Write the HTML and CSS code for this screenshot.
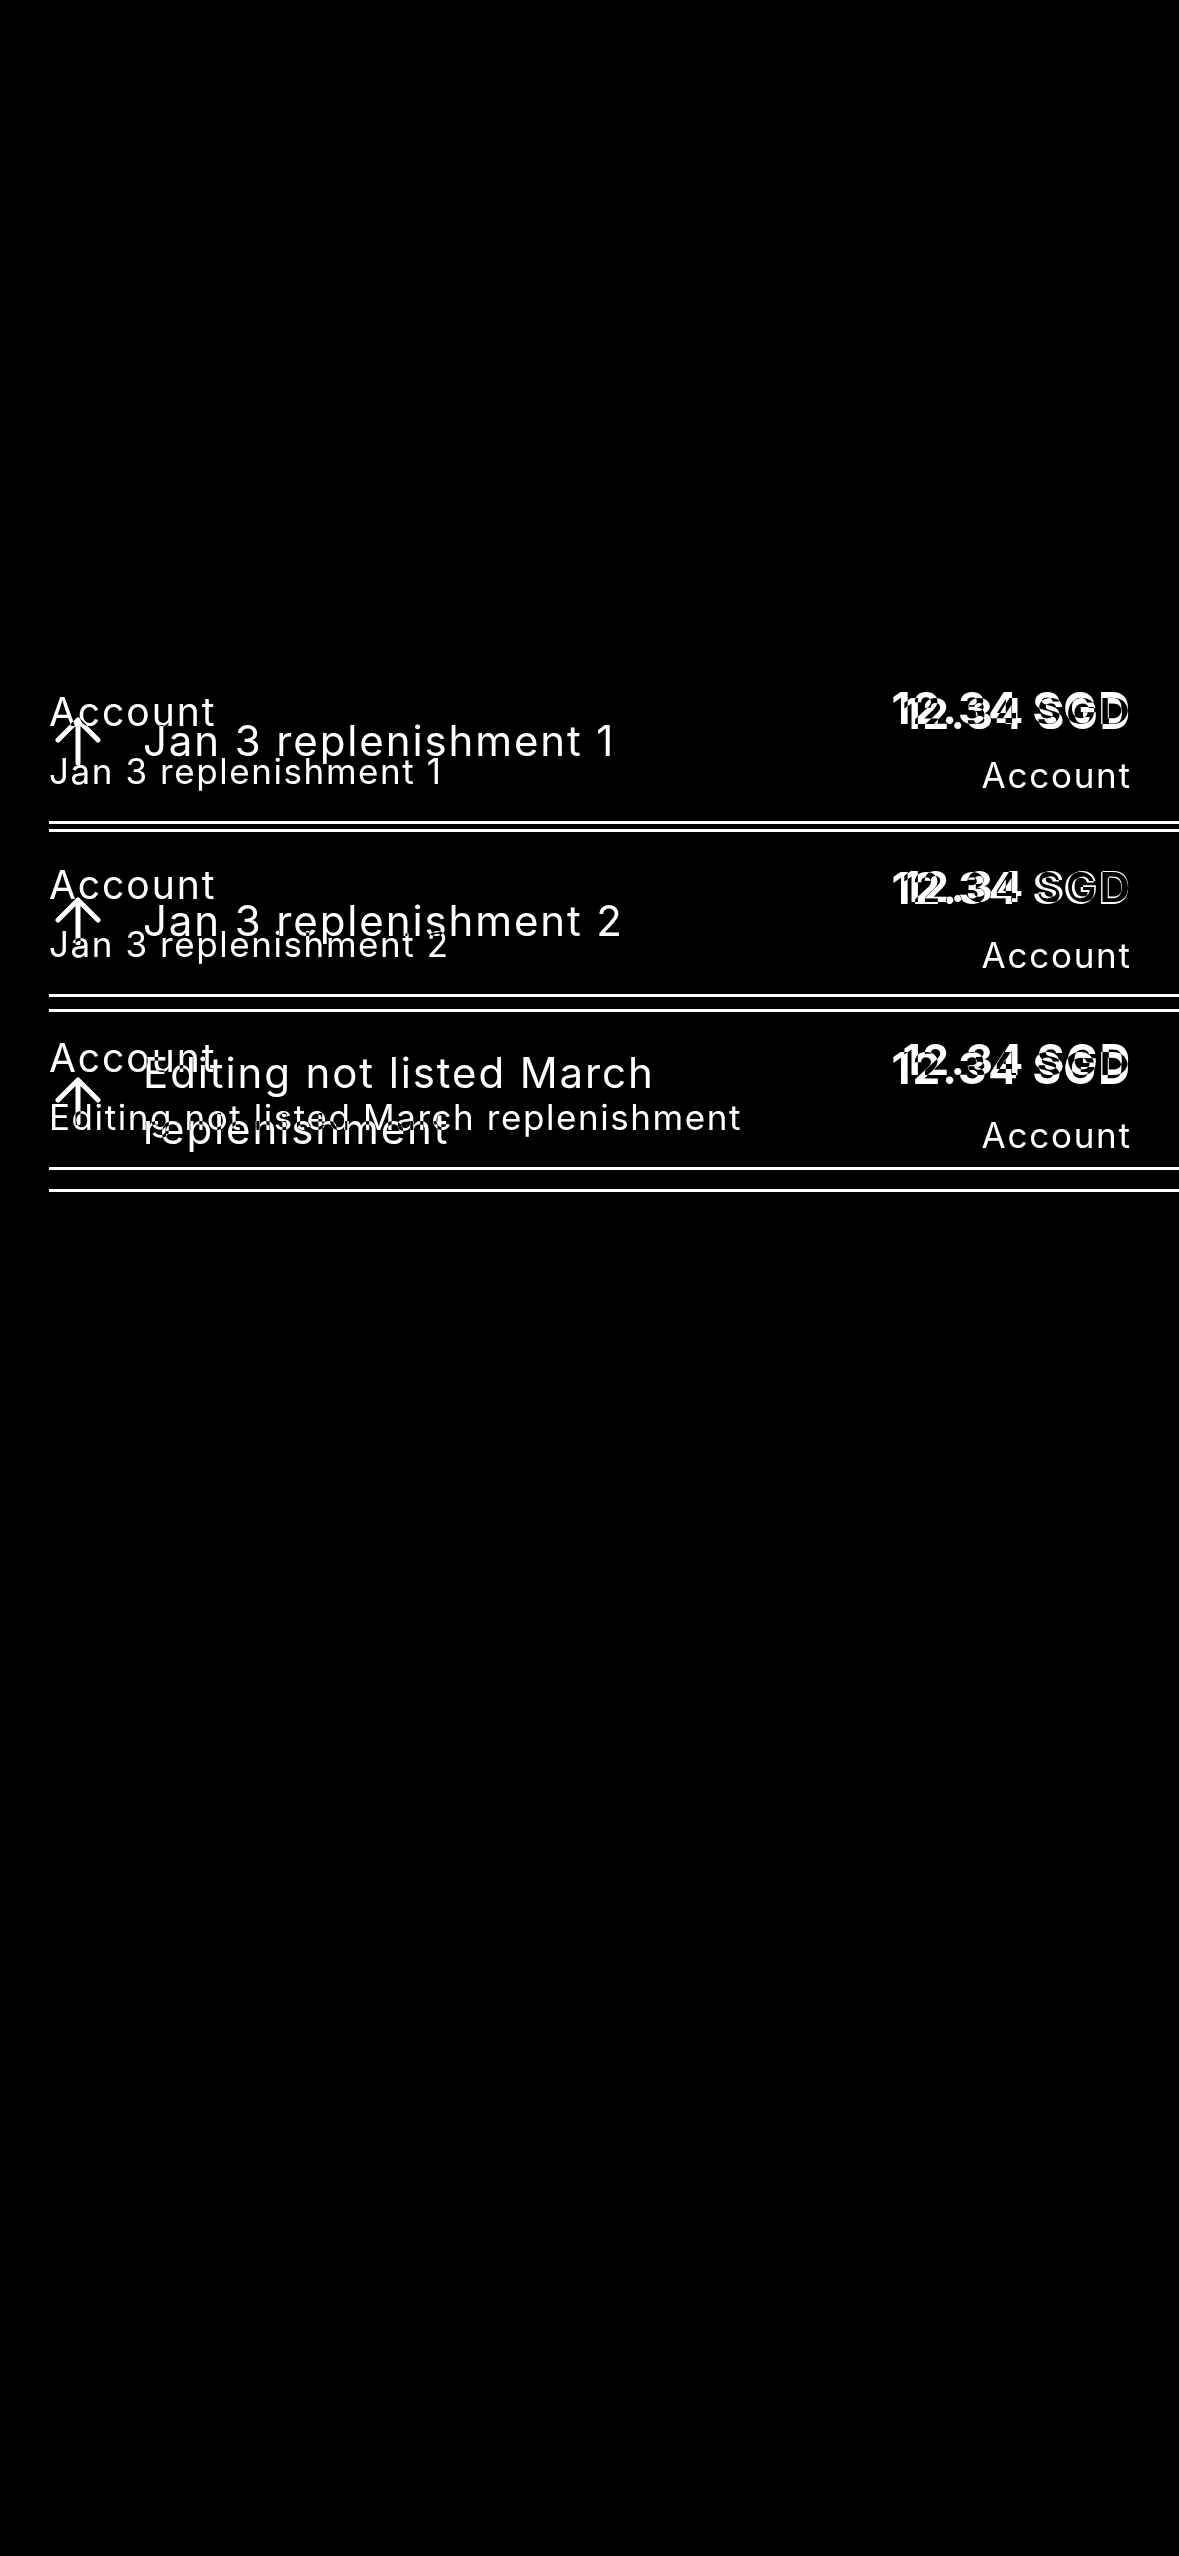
FILE: index.html
```html
<!DOCTYPE html>
<html lang="en">
<head>
<meta charset="utf-8">
<title>Transactions</title>
<link rel="stylesheet" href="styles.css">
</head>
<body>
<div class="screen">
  <div class="stack">
    <div class="layer layer-a">
      <div class="row-a">
        <div class="left-a">
          <div class="caption">Account</div>
          <div class="title-a">Jan 3 replenishment 1</div>
        </div>
        <div class="amount-a">12.34 SGD</div>
      </div>
      <div class="row-a">
        <div class="left-a">
          <div class="caption">Account</div>
          <div class="title-a">Jan 3 replenishment 2</div>
        </div>
        <div class="amount-a">12.34 SGD</div>
      </div>
      <div class="row-a">
        <div class="left-a">
          <div class="caption">Account</div>
          <div class="title-a">Editing not listed March replenishment</div>
        </div>
        <div class="amount-a">12.34 SGD</div>
      </div>
    </div>
    <div class="layer layer-b">
      <div class="row-b">
        <svg class="icon" viewBox="0 0 48 48" fill="none" stroke="#fff" stroke-width="5" stroke-linecap="round" stroke-linejoin="round"><path d="M24 3V46M4 23L24 3L44 23"/></svg>
        <div class="title-b">Jan 3 replenishment 1</div>
        <div class="right-b">
          <div class="amount-b">12.34 SGD</div>
          <div class="sub">Account</div>
        </div>
      </div>
      <div class="row-b">
        <svg class="icon" viewBox="0 0 48 48" fill="none" stroke="#fff" stroke-width="5" stroke-linecap="round" stroke-linejoin="round"><path d="M24 3V46M4 23L24 3L44 23"/></svg>
        <div class="title-b">Jan 3 replenishment 2</div>
        <div class="right-b">
          <div class="amount-b">12.34 SGD</div>
          <div class="sub">Account</div>
        </div>
      </div>
      <div class="row-b">
        <svg class="icon" viewBox="0 0 48 48" fill="none" stroke="#fff" stroke-width="5" stroke-linecap="round" stroke-linejoin="round"><path d="M24 3V46M4 23L24 3L44 23"/></svg>
        <div class="title-b">Editing not listed March replenishment</div>
        <div class="right-b">
          <div class="amount-b">12.34 SGD</div>
          <div class="sub">Account</div>
        </div>
      </div>
    </div>
  </div>
</div>
</body>
</html>
```
FILE: styles.css
```css
html, body {
  margin: 0;
  padding: 0;
  background: #000;
}
body {
  width: 1179px;
  height: 2556px;
  overflow: hidden;
  color: #fff;
  font-family: Inter, "Noto Sans", sans-serif;
}
.screen {
  padding-top: 651px;
}
.stack {
  display: grid;
}
.layer {
  grid-area: 1 / 1;
}
.layer-b {
  padding-top: 1px;
  mix-blend-mode: difference;
}

/* layer A */
.row-a {
  margin-left: 49px;
  padding: 38px 49px 28px 0;
  border-bottom: 3px solid #fff;
  display: flex;
  justify-content: space-between;
  align-items: flex-start;
  gap: 24px;
}
.caption {
  font-size: 39px;
  line-height: 46px;
  letter-spacing: 0.05em;
}
.title-a {
  font-size: 35px;
  line-height: 44px;
  margin-top: 14px;
  letter-spacing: 0.045em;
}
.amount-a {
  font-size: 42px;
  font-weight: 700;
  line-height: 46px;
  margin-top: 2px;
  white-space: nowrap;
  letter-spacing: 0.045em;
  margin-right: -0.045em;
}

/* layer B */
.row-b {
  margin-left: 49px;
  padding: 33px 49px 32px 0;
  border-bottom: 3px solid #fff;
  display: flex;
  align-items: center;
  gap: 24px;
}
.icon {
  width: 48px;
  height: 48px;
  margin-left: 5px;
  margin-right: 17px;
  flex: none;
}
.title-b {
  flex: 1;
  font-size: 42px;
  line-height: 56px;
  letter-spacing: 0.045em;
}
.right-b {
  display: flex;
  flex-direction: column;
  align-items: flex-end;
}
.amount-b {
  font-size: 44px;
  font-weight: 700;
  line-height: 46px;
  white-space: nowrap;
  letter-spacing: 0.045em;
  margin-right: -0.045em;
}
.sub {
  font-size: 35px;
  line-height: 44px;
  margin-top: 22px;
  letter-spacing: 0.05em;
  margin-right: -0.05em;
}
```
